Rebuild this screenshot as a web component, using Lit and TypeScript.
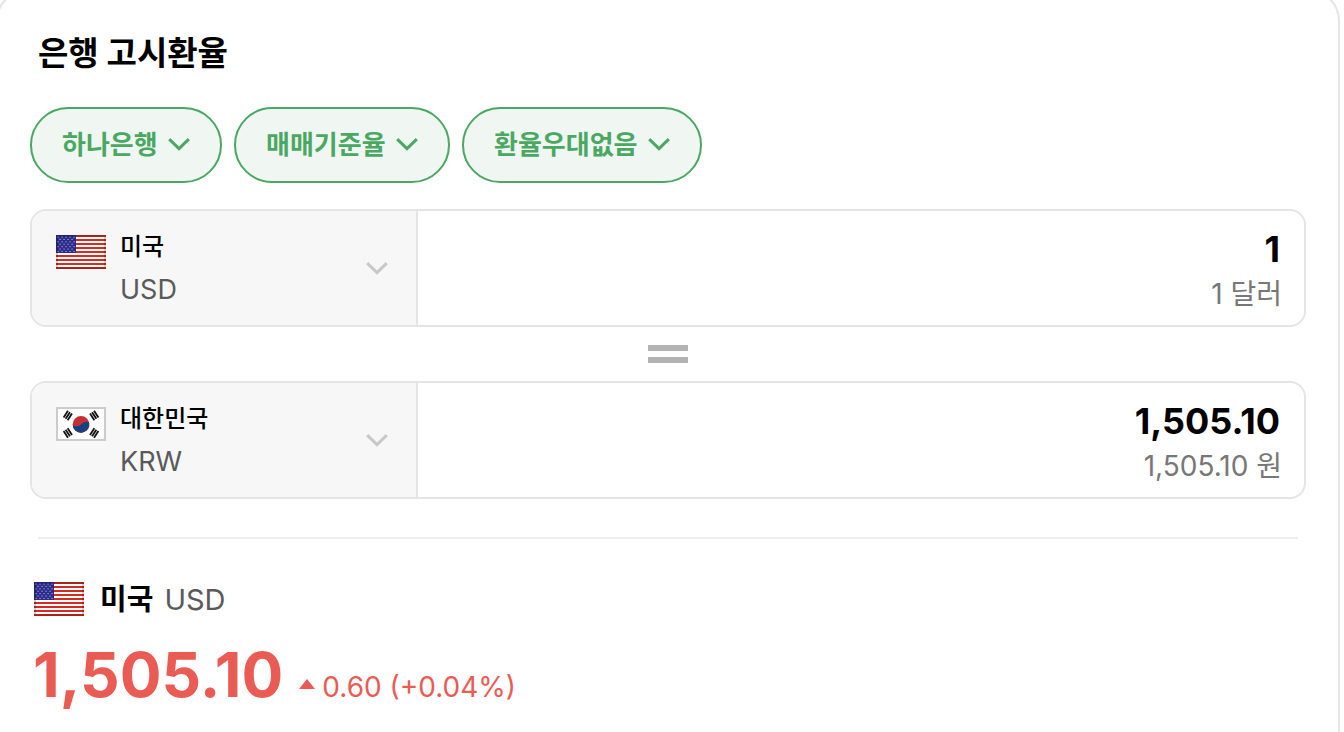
import { LitElement, html, css, svg } from "lit";
import { customElement, property } from "lit/decorators.js";

const chevron = html`<svg class="chevron" viewBox="0 0 22 16" aria-hidden="true">
  <path d="M1.2 2.2 11 11.6 20.8 2.2" fill="none" stroke="currentColor" stroke-width="3" />
</svg>`;

@customElement("country-flag")
class CountryFlag extends LitElement {
  @property() code = "USD";

  static styles = css`
    :host { display: block; flex: none; width: 50px; height: 34px; }
    svg { display: block; width: 50px; height: 34px; }
  `;

  private usa() {
    const stripes = Array.from({ length: 9 }, (_, i) => svg`<rect y=${i * 4} width="50" height="2" fill="#d82b20" />`);
    const stars = [];
    for (let row = 0; row < 7; row++) {
      for (let col = 0; col < (row % 2 ? 4 : 5); col++) {
        stars.push(svg`<rect x=${1.5 + col * 4 + (row % 2 ? 2 : 0)} y=${1.5 + row * 2.4} width="1.1" height="1.1" fill="#b9b9dc" />`);
      }
    }
    return svg`<rect width="50" height="34" fill="#fff" />${stripes}
      <rect width="20" height="18" fill="#2b2b8c" />${stars}`;
  }

  private korea() {
    const marks = [[11.8, 8.5, -57], [38.2, 8.5, 57], [11.8, 26, 57], [38.2, 26, -57]];
    return svg`<rect width="50" height="34" fill="#fff" />
      <g transform="translate(25 17.4)">
        <circle r="8.3" fill="#c62f35" />
        <path d="M-8.3 0C-6.5 2.6 -2.8 2.6 0 0C2.2 -2.8 5.8 -3.2 8 -2.2A8.3 8.3 0 1 1 -8.3 0Z" fill="#18407f" />
      </g>
      ${marks.map(
        ([x, y, angle]) => svg`<g transform="translate(${x} ${y}) rotate(${angle})" fill="#111">
          <rect x="-4" y="-3.3" width="8" height="1.8" />
          <rect x="-4" y="-0.9" width="8" height="1.8" />
          <rect x="-4" y="1.5" width="8" height="1.8" />
        </g>`
      )}`;
  }

  render() {
    return html`<svg viewBox="0 0 50 34" aria-hidden="true">
      ${this.code === "USD" ? this.usa() : this.korea()}
      <rect x="1" y="1" width="48" height="32" fill="none" stroke="#000" stroke-opacity="0.2" stroke-width="2" />
    </svg>`;
  }
}

@customElement("app-root")
class AppRoot extends LitElement {
  static styles = css`
    :host {
      display: block;
      height: 100vh;
      overflow: hidden;
      background: #fff;
      color: #000;
      font-family: Inter, "Noto Sans CJK KR", sans-serif;
    }
    * { box-sizing: border-box; }
    .card {
      min-height: calc(100vh + 40px);
      margin: -11px 4px 0 -4px;
      padding: 40px 32px 0;
      border: 2px solid #e5e5e5;
      border-radius: 32px;
    }
    .title { margin: 0 8px; font-size: 33px; line-height: 44px; font-weight: 700; }
    .filters { display: flex; gap: 12px; margin: 32px 0 26px; }
    .pill { display: inline-grid; align-items: center; color: #4ba862; }
    .pill > * { grid-area: 1 / 1; }
    select, input { margin: 0; border: 0; background: none; font-family: inherit; color: inherit; outline-offset: 2px; }
    select { appearance: none; cursor: pointer; }
    .pill select {
      height: 76px;
      padding: 0 62px 2px 30px;
      border: 2px solid #4ba862;
      border-radius: 38px;
      background: #f0f7f3;
      font-size: 26px;
      font-weight: 700;
    }
    .chevron { display: block; width: 22px; height: 16px; pointer-events: none; }
    .pill .chevron { justify-self: end; margin-right: 32px; }
    .row {
      display: flex;
      height: 118px;
      border: 2px solid #e5e5e5;
      border-radius: 16px;
      overflow: hidden;
    }
    .unit {
      display: grid;
      grid-template-columns: 50px 1fr;
      grid-template-rows: 34px 34px;
      column-gap: 14px;
      row-gap: 10px;
      flex: none;
      width: 386px;
      padding: 18px 28px 0 24px;
      border-right: 2px solid #e5e5e5;
      background: #f7f7f7;
    }
    .unit country-flag { margin-top: 6px; }
    .picker { display: grid; }
    .picker > * { grid-area: 1 / 1; }
    .picker select { width: 100%; height: 34px; padding: 0; font-size: 24px; font-weight: 500; }
    .picker .chevron { justify-self: end; align-self: end; margin-bottom: -14px; color: #c8c8c8; }
    .code { grid-column: 2; font-size: 27px; line-height: 34px; color: #5a5a5a; }
    .amount { flex: 1; min-width: 0; padding: 15px 22px 0; text-align: right; }
    .amount input {
      display: block;
      width: 100%;
      height: 46px;
      padding: 0 2px;
      text-align: right;
      font-size: 36px;
      font-weight: 700;
    }
    .reading { display: block; font-size: 28px; line-height: 44px; color: #777; }
    .equals { display: grid; gap: 6px; width: 40px; margin: 18px auto; }
    .equals span { height: 6px; background: #b4b4b5; }
    .divider { height: 2px; margin: 38px 8px 40px; border: 0; background: #eee; }
    .summary { padding: 0 3px; }
    .country { display: flex; align-items: center; gap: 16px; margin: 0 1px; font-size: 29px; line-height: 38px; font-weight: 700; }
    .country .names { display: flex; align-items: baseline; gap: 11px; padding-top: 2px; }
    .country .iso { font-size: 29px; font-weight: 400; color: #5a5a5a; }
    .rate { display: flex; align-items: baseline; gap: 16px; margin: 18px 0 0; color: #ea5b54; }
    .price { font-size: 62px; line-height: 76px; font-weight: 700; }
    .up { width: 16px; height: 10px; margin-right: 7px; vertical-align: 8px; }
    .change { font-size: 28px; }
  `;

  private pill(id: string, label: string, options: string[]) {
    return html`<div class="pill">
      <select id=${id} aria-label=${label}>
        ${options.map((option) => html`<option>${option}</option>`)}
      </select>
      ${chevron}
    </div>`;
  }

  private currency(name: string, code: string, value: string, reading: string) {
    return html`<div class="row">
      <div class="unit">
        <country-flag code=${code}></country-flag>
        <div class="picker">
          <select aria-label="통화"><option>${name}</option></select>
          ${chevron}
        </div>
        <span class="code">${code}</span>
      </div>
      <div class="amount">
        <input type="text" inputmode="decimal" aria-label="${name} 금액" .value=${value} />
        <span class="reading">${reading}</span>
      </div>
    </div>`;
  }

  render() {
    return html`<main class="card">
      <h1 class="title">은행 고시환율</h1>
      <div class="filters">
        ${this.pill("bank", "은행", ["하나은행", "신한은행"])}
        ${this.pill("basis", "기준", ["매매기준율"])}
        ${this.pill("discount", "우대", ["환율우대없음"])}
      </div>
      ${this.currency("미국", "USD", "1", "1 달러")}
      <div class="equals" aria-hidden="true"><span></span><span></span></div>
      ${this.currency("대한민국", "KRW", "1,505.10", "1,505.10 원")}
      <hr class="divider" />
      <section class="summary">
        <h2 class="country">
          <country-flag code="USD"></country-flag>
          <span class="names"><span>미국</span><span class="iso">USD</span></span>
        </h2>
        <p class="rate">
          <strong class="price">1,505.10</strong>
          <span class="change"><svg class="up" viewBox="0 0 16 10" aria-hidden="true"><path d="M8 0 16 10H0Z" fill="currentColor" /></svg>0.60 (+0.04%)</span>
        </p>
      </section>
    </main>`;
  }
}
